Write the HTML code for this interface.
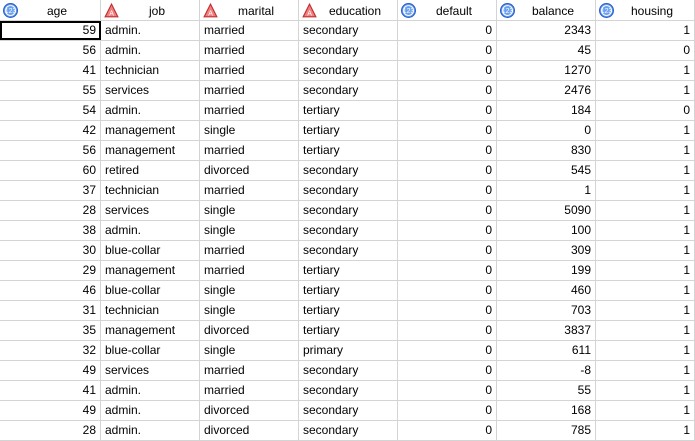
<!DOCTYPE html>
<html><head><meta charset="utf-8"><style>
*{margin:0;padding:0;box-sizing:border-box}
body{width:695px;height:441px;overflow:hidden;background:#fff;font-family:"Liberation Sans","Noto Sans CJK KR",sans-serif;font-size:12px;color:#000}
.r{display:flex;height:20px;border-bottom:1px solid #d4d4d4}
.c{width:99px;flex:none;border-right:1px solid #d4d4d4;line-height:19px;padding:0 4px;white-space:nowrap;overflow:hidden;position:relative}
.c:first-child{width:101px}
.n{text-align:right}
.h .c{text-align:center;padding-left:18px;line-height:22px}
.h{height:21px;border-bottom:1px solid #d4d4d4}
.ic{position:absolute;left:3px;top:3px;width:15px;height:15px}
.sel{outline:2px solid #000;outline-offset:-2px}
</style></head><body>
<div class="r h">
<div class="c"><svg class="ic" viewBox="0 0 13 13"><circle cx="6.5" cy="6.5" r="6" fill="#6aa0f0" stroke="#2a5fc8"/><circle cx="6.5" cy="6.5" r="4.3" fill="none" stroke="#fff" stroke-width="0.8"/><text x="6.5" y="8.7" font-size="6" text-anchor="middle" fill="#fff" font-family="Liberation Sans">123</text></svg>age</div>
<div class="c"><svg class="ic" viewBox="0 0 13 13"><path d="M6.5 1L12 12H1Z" fill="#f08080" stroke="#c03030"/><text x="6.5" y="11" font-size="6" text-anchor="middle" fill="#fff" font-family="Liberation Sans">A</text></svg>job</div>
<div class="c"><svg class="ic" viewBox="0 0 13 13"><path d="M6.5 1L12 12H1Z" fill="#f08080" stroke="#c03030"/><text x="6.5" y="11" font-size="6" text-anchor="middle" fill="#fff" font-family="Liberation Sans">A</text></svg>marital</div>
<div class="c"><svg class="ic" viewBox="0 0 13 13"><path d="M6.5 1L12 12H1Z" fill="#f08080" stroke="#c03030"/><text x="6.5" y="11" font-size="6" text-anchor="middle" fill="#fff" font-family="Liberation Sans">A</text></svg>education</div>
<div class="c"><svg class="ic" viewBox="0 0 13 13"><circle cx="6.5" cy="6.5" r="6" fill="#6aa0f0" stroke="#2a5fc8"/><circle cx="6.5" cy="6.5" r="4.3" fill="none" stroke="#fff" stroke-width="0.8"/><text x="6.5" y="8.7" font-size="6" text-anchor="middle" fill="#fff" font-family="Liberation Sans">123</text></svg>default</div>
<div class="c"><svg class="ic" viewBox="0 0 13 13"><circle cx="6.5" cy="6.5" r="6" fill="#6aa0f0" stroke="#2a5fc8"/><circle cx="6.5" cy="6.5" r="4.3" fill="none" stroke="#fff" stroke-width="0.8"/><text x="6.5" y="8.7" font-size="6" text-anchor="middle" fill="#fff" font-family="Liberation Sans">123</text></svg>balance</div>
<div class="c"><svg class="ic" viewBox="0 0 13 13"><circle cx="6.5" cy="6.5" r="6" fill="#6aa0f0" stroke="#2a5fc8"/><circle cx="6.5" cy="6.5" r="4.3" fill="none" stroke="#fff" stroke-width="0.8"/><text x="6.5" y="8.7" font-size="6" text-anchor="middle" fill="#fff" font-family="Liberation Sans">123</text></svg>housing</div>
</div>
<div class="r"><div class="c n sel">59</div><div class="c">admin.</div><div class="c">married</div><div class="c">secondary</div><div class="c n">0</div><div class="c n">2343</div><div class="c n">1</div></div>
<div class="r"><div class="c n">56</div><div class="c">admin.</div><div class="c">married</div><div class="c">secondary</div><div class="c n">0</div><div class="c n">45</div><div class="c n">0</div></div>
<div class="r"><div class="c n">41</div><div class="c">technician</div><div class="c">married</div><div class="c">secondary</div><div class="c n">0</div><div class="c n">1270</div><div class="c n">1</div></div>
<div class="r"><div class="c n">55</div><div class="c">services</div><div class="c">married</div><div class="c">secondary</div><div class="c n">0</div><div class="c n">2476</div><div class="c n">1</div></div>
<div class="r"><div class="c n">54</div><div class="c">admin.</div><div class="c">married</div><div class="c">tertiary</div><div class="c n">0</div><div class="c n">184</div><div class="c n">0</div></div>
<div class="r"><div class="c n">42</div><div class="c">management</div><div class="c">single</div><div class="c">tertiary</div><div class="c n">0</div><div class="c n">0</div><div class="c n">1</div></div>
<div class="r"><div class="c n">56</div><div class="c">management</div><div class="c">married</div><div class="c">tertiary</div><div class="c n">0</div><div class="c n">830</div><div class="c n">1</div></div>
<div class="r"><div class="c n">60</div><div class="c">retired</div><div class="c">divorced</div><div class="c">secondary</div><div class="c n">0</div><div class="c n">545</div><div class="c n">1</div></div>
<div class="r"><div class="c n">37</div><div class="c">technician</div><div class="c">married</div><div class="c">secondary</div><div class="c n">0</div><div class="c n">1</div><div class="c n">1</div></div>
<div class="r"><div class="c n">28</div><div class="c">services</div><div class="c">single</div><div class="c">secondary</div><div class="c n">0</div><div class="c n">5090</div><div class="c n">1</div></div>
<div class="r"><div class="c n">38</div><div class="c">admin.</div><div class="c">single</div><div class="c">secondary</div><div class="c n">0</div><div class="c n">100</div><div class="c n">1</div></div>
<div class="r"><div class="c n">30</div><div class="c">blue-collar</div><div class="c">married</div><div class="c">secondary</div><div class="c n">0</div><div class="c n">309</div><div class="c n">1</div></div>
<div class="r"><div class="c n">29</div><div class="c">management</div><div class="c">married</div><div class="c">tertiary</div><div class="c n">0</div><div class="c n">199</div><div class="c n">1</div></div>
<div class="r"><div class="c n">46</div><div class="c">blue-collar</div><div class="c">single</div><div class="c">tertiary</div><div class="c n">0</div><div class="c n">460</div><div class="c n">1</div></div>
<div class="r"><div class="c n">31</div><div class="c">technician</div><div class="c">single</div><div class="c">tertiary</div><div class="c n">0</div><div class="c n">703</div><div class="c n">1</div></div>
<div class="r"><div class="c n">35</div><div class="c">management</div><div class="c">divorced</div><div class="c">tertiary</div><div class="c n">0</div><div class="c n">3837</div><div class="c n">1</div></div>
<div class="r"><div class="c n">32</div><div class="c">blue-collar</div><div class="c">single</div><div class="c">primary</div><div class="c n">0</div><div class="c n">611</div><div class="c n">1</div></div>
<div class="r"><div class="c n">49</div><div class="c">services</div><div class="c">married</div><div class="c">secondary</div><div class="c n">0</div><div class="c n">-8</div><div class="c n">1</div></div>
<div class="r"><div class="c n">41</div><div class="c">admin.</div><div class="c">married</div><div class="c">secondary</div><div class="c n">0</div><div class="c n">55</div><div class="c n">1</div></div>
<div class="r"><div class="c n">49</div><div class="c">admin.</div><div class="c">divorced</div><div class="c">secondary</div><div class="c n">0</div><div class="c n">168</div><div class="c n">1</div></div>
<div class="r"><div class="c n">28</div><div class="c">admin.</div><div class="c">divorced</div><div class="c">secondary</div><div class="c n">0</div><div class="c n">785</div><div class="c n">1</div></div>
</body></html>
